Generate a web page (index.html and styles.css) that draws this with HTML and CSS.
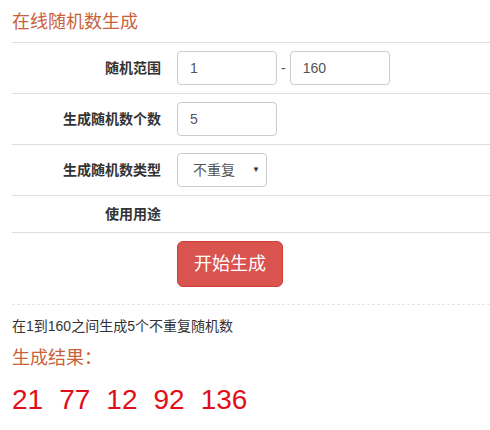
FILE: index.html
```html
<!DOCTYPE html>
<html lang="zh-CN">
<head>
	<meta charset="UTF-8">
	<meta name="viewport" content="width=device-width, initial-scale=1.0">
	<title>在线随机数生成</title>
	<link rel="stylesheet" href="styles.css">
</head>
<body>
	<div class="page">
		<div class="title">在线随机数生成</div>
		<table class="form-table">
			<tr>
				<td class="label">随机范围</td>
				<td>
					<div class="range">
						<input class="form-control" type="text" value="1">
						<span class="dash">-</span>
						<input class="form-control" type="text" value="160">
					</div>
				</td>
			</tr>
			<tr>
				<td class="label">生成随机数个数</td>
				<td><input class="form-control" type="text" value="5"></td>
			</tr>
			<tr>
				<td class="label">生成随机数类型</td>
				<td>
					<div class="select">
						<span>不重复</span>
						<span class="caret">&#9660;</span>
					</div>
				</td>
			</tr>
			<tr>
				<td class="label">使用用途</td>
				<td></td>
			</tr>
			<tr>
				<td></td>
				<td><button class="btn-danger" type="button">开始生成</button></td>
			</tr>
		</table>
		<div class="sep"></div>
		<p class="summary">在1到160之间生成5个不重复随机数</p>
		<div class="result-title">生成结果：</div>
		<div class="result">
			<span>21</span><span>77</span><span>12</span><span>92</span><span>136</span>
		</div>
	</div>
</body>
</html>
```

FILE: styles.css
```css
html, body { margin: 0; background: #fff; }
body { font-family: "Liberation Sans", "Noto Sans CJK SC", sans-serif; font-size: 14px; line-height: 20px; color: #333; overflow: hidden; }
.page { padding: 12px 0 0 12px; }
.title { font-size: 18px; line-height: 20px; color: #c8623c; margin-bottom: 10px; }

.form-table { width: 100%; border-collapse: collapse; border-spacing: 0; }
.form-table td { padding: 8px; border-top: 1px solid #ddd; vertical-align: middle; }
.form-table td.label { width: 141px; text-align: right; font-weight: bold; }

.range { display: flex; align-items: center; }
.dash { color: #555; margin: 0 4px; }
.form-control { box-sizing: border-box; width: 100px; height: 34px; padding: 6px 12px; font: inherit; font-size: 14px; color: #555; border: 1px solid #ccc; border-radius: 4px; background: #fff; margin: 0; display: block; }

.select { box-sizing: border-box; width: 90px; height: 34px; padding: 0 6px 0 15px; border: 1px solid #ccc; border-radius: 4px; display: flex; align-items: center; justify-content: space-between; color: #555; }
.caret { font-size: 8px; color: #333; }

.btn-danger { display: block; box-sizing: border-box; height: 46px; padding: 10px 16px; font: inherit; font-size: 18px; line-height: 24px; color: #fff; background: #d9534f; border: 1px solid #d43f3a; border-radius: 6px; }

.sep { margin-top: 9px; border-top: 1px dashed #e6e6e6; }
.summary { margin: 11px 0 0; }
.result-title { margin-top: 10px; font-size: 18px; line-height: 24px; color: #c8623c; }
.result { margin-top: 13px; font-size: 28px; line-height: 34px; color: #e0101a; }
.result span { margin-right: 16px; }
```
